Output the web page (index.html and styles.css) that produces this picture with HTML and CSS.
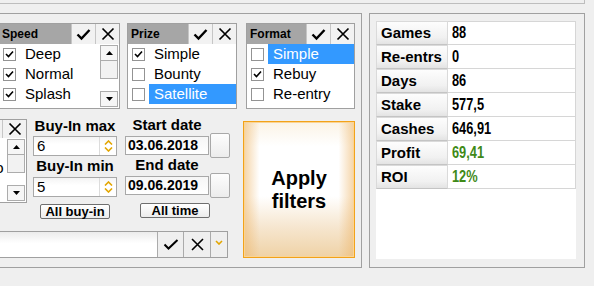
FILE: index.html
```html
<!DOCTYPE html>
<html lang="en">
<head>
    <meta charset="UTF-8">
    <meta name="viewport" content="width=device-width, initial-scale=1.0">
    <title>Filters</title>
    <link rel="stylesheet" href="styles.css">
</head>
<body>
    <div class="top-strip"></div>
    <div class="main">
        <div class="filters">
            <div class="lists">
                <div class="list-box speed">
                    <div class="lb-head">
                        <span class="lb-title">Speed</span>
                        <button class="hbtn"><svg width="15" height="13" viewBox="0 0 15 13"><path d="M1.5 6.5 L5.5 10.5 L13.5 2" fill="none" stroke="#000" stroke-width="2.4"/></svg></button>
                        <button class="hbtn"><svg width="14" height="14" viewBox="0 0 14 14"><path d="M1.5 1.5 L12.5 12.5 M12.5 1.5 L1.5 12.5" fill="none" stroke="#000" stroke-width="1.7"/></svg></button>
                    </div>
                    <div class="lb-body">
                        <ul class="items">
                            <li class="item"><span class="cb"><svg width="9" height="8" viewBox="0 0 9 8"><path d="M1 4 L3.5 6.5 L8 1.5" fill="none" stroke="#000" stroke-width="1.6"/></svg></span><span class="item-text">Deep</span></li>
                            <li class="item"><span class="cb"><svg width="9" height="8" viewBox="0 0 9 8"><path d="M1 4 L3.5 6.5 L8 1.5" fill="none" stroke="#000" stroke-width="1.6"/></svg></span><span class="item-text">Normal</span></li>
                            <li class="item"><span class="cb"><svg width="9" height="8" viewBox="0 0 9 8"><path d="M1 4 L3.5 6.5 L8 1.5" fill="none" stroke="#000" stroke-width="1.6"/></svg></span><span class="item-text">Splash</span></li>
                        </ul>
                        <div class="scrollbar">
                            <div class="sb-btn"><svg width="7" height="4" viewBox="0 0 7 4"><polygon points="0,4 3.5,0 7,4" fill="#000"/></svg></div>
                            <div class="sb-thumb"></div>
                            <div class="sb-track"></div>
                            <div class="sb-btn"><svg width="7" height="4" viewBox="0 0 7 4"><polygon points="0,0 7,0 3.5,4" fill="#000"/></svg></div>
                        </div>
                    </div>
                </div>

                <div class="list-box prize">
                    <div class="lb-head">
                        <span class="lb-title">Prize</span>
                        <button class="hbtn"><svg width="15" height="13" viewBox="0 0 15 13"><path d="M1.5 6.5 L5.5 10.5 L13.5 2" fill="none" stroke="#000" stroke-width="2.4"/></svg></button>
                        <button class="hbtn"><svg width="14" height="14" viewBox="0 0 14 14"><path d="M1.5 1.5 L12.5 12.5 M12.5 1.5 L1.5 12.5" fill="none" stroke="#000" stroke-width="1.7"/></svg></button>
                    </div>
                    <div class="lb-body">
                        <ul class="items">
                            <li class="item"><span class="cb"><svg width="9" height="8" viewBox="0 0 9 8"><path d="M1 4 L3.5 6.5 L8 1.5" fill="none" stroke="#000" stroke-width="1.6"/></svg></span><span class="item-text">Simple</span></li>
                            <li class="item"><span class="cb"></span><span class="item-text">Bounty</span></li>
                            <li class="item selected"><span class="cb"></span><span class="item-text">Satellite</span></li>
                        </ul>
                    </div>
                </div>

                <div class="list-box format">
                    <div class="lb-head">
                        <span class="lb-title">Format</span>
                        <button class="hbtn"><svg width="15" height="13" viewBox="0 0 15 13"><path d="M1.5 6.5 L5.5 10.5 L13.5 2" fill="none" stroke="#000" stroke-width="2.4"/></svg></button>
                        <button class="hbtn"><svg width="14" height="14" viewBox="0 0 14 14"><path d="M1.5 1.5 L12.5 12.5 M12.5 1.5 L1.5 12.5" fill="none" stroke="#000" stroke-width="1.7"/></svg></button>
                    </div>
                    <div class="lb-body">
                        <ul class="items">
                            <li class="item selected"><span class="cb"></span><span class="item-text">Simple</span></li>
                            <li class="item"><span class="cb"><svg width="9" height="8" viewBox="0 0 9 8"><path d="M1 4 L3.5 6.5 L8 1.5" fill="none" stroke="#000" stroke-width="1.6"/></svg></span><span class="item-text">Rebuy</span></li>
                            <li class="item"><span class="cb"></span><span class="item-text">Re-entry</span></li>
                        </ul>
                    </div>
                </div>
            </div>

            <div class="lower">
                <div class="lower-left">
                    <div class="controls">
                        <div class="list-box partial">
                            <div class="lb-head short">
                                <span class="lb-title"></span>
                                <button class="hbtn"><svg width="15" height="13" viewBox="0 0 15 13"><path d="M1.5 6.5 L5.5 10.5 L13.5 2" fill="none" stroke="#000" stroke-width="2.4"/></svg></button>
                                <button class="hbtn"><svg width="14" height="14" viewBox="0 0 14 14"><path d="M1.5 1.5 L12.5 12.5 M12.5 1.5 L1.5 12.5" fill="none" stroke="#000" stroke-width="1.7"/></svg></button>
                            </div>
                            <div class="lb-body">
                                <ul class="items">
                                    <li class="item"><span class="cb"></span><span class="item-text">Slow</span></li>
                                    <li class="item"><span class="cb"></span><span class="item-text">Turbo</span></li>
                                    <li class="item"><span class="cb"></span><span class="item-text">Fast</span></li>
                                </ul>
                                <div class="scrollbar">
                                    <div class="sb-btn"><svg width="7" height="4" viewBox="0 0 7 4"><polygon points="0,4 3.5,0 7,4" fill="#000"/></svg></div>
                                    <div class="sb-thumb"></div>
                                    <div class="sb-track"></div>
                                    <div class="sb-btn"><svg width="7" height="4" viewBox="0 0 7 4"><polygon points="0,0 7,0 3.5,4" fill="#000"/></svg></div>
                                </div>
                            </div>
                        </div>

                        <div class="buyin">
                            <div class="field-label">Buy-In max</div>
                            <div class="spin">
                                <span class="spin-value">6</span>
                                <span class="spin-arrows">
                                    <svg width="9" height="5" viewBox="0 0 9 5"><path d="M1 4.5 L4.5 1 L8 4.5" fill="none" stroke="#e3a600" stroke-width="1.6"/></svg>
                                    <svg width="9" height="5" viewBox="0 0 9 5"><path d="M1 0.5 L4.5 4 L8 0.5" fill="none" stroke="#e3a600" stroke-width="1.6"/></svg>
                                </span>
                            </div>
                            <div class="field-label second">Buy-In min</div>
                            <div class="spin">
                                <span class="spin-value">5</span>
                                <span class="spin-arrows">
                                    <svg width="9" height="5" viewBox="0 0 9 5"><path d="M1 4.5 L4.5 1 L8 4.5" fill="none" stroke="#e3a600" stroke-width="1.6"/></svg>
                                    <svg width="9" height="5" viewBox="0 0 9 5"><path d="M1 0.5 L4.5 4 L8 0.5" fill="none" stroke="#e3a600" stroke-width="1.6"/></svg>
                                </span>
                            </div>
                            <button class="small-btn buyin-btn">All buy-in</button>
                        </div>

                        <div class="dates">
                            <div class="date-label">Start date</div>
                            <div class="date-row">
                                <span class="date-field">03.06.2018</span>
                                <button class="date-btn"></button>
                            </div>
                            <div class="date-label">End date</div>
                            <div class="date-row">
                                <span class="date-field">09.06.2019</span>
                                <button class="date-btn"></button>
                            </div>
                            <button class="small-btn time-btn">All time</button>
                        </div>
                    </div>

                    <div class="search">
                        <div class="search-field"></div>
                        <button class="sbtn ok"><svg width="16" height="13" viewBox="0 0 16 13"><path d="M1.5 6.5 L5.5 10.5 L14.5 2" fill="none" stroke="#000" stroke-width="2"/></svg></button>
                        <button class="sbtn cancel"><svg width="13" height="13" viewBox="0 0 13 13"><path d="M1 1 L12 12 M12 1 L1 12" fill="none" stroke="#000" stroke-width="1.6"/></svg></button>
                        <button class="sbtn drop"><svg width="8" height="5" viewBox="0 0 8 5"><path d="M1 1 L4 4 L7 1" fill="none" stroke="#e3a600" stroke-width="1.6"/></svg></button>
                    </div>
                </div>

                <button class="apply">Apply<br>filters</button>
            </div>
        </div>

        <div class="stats">
            <div class="stats-body">
                <div class="stat-row"><div class="stat-name">Games</div><div class="stat-value"><span>88</span></div></div>
                <div class="stat-row"><div class="stat-name">Re-entrs</div><div class="stat-value"><span>0</span></div></div>
                <div class="stat-row"><div class="stat-name">Days</div><div class="stat-value"><span>86</span></div></div>
                <div class="stat-row"><div class="stat-name">Stake</div><div class="stat-value"><span>577,5</span></div></div>
                <div class="stat-row"><div class="stat-name">Cashes</div><div class="stat-value"><span>646,91</span></div></div>
                <div class="stat-row"><div class="stat-name">Profit</div><div class="stat-value plus"><span>69,41</span></div></div>
                <div class="stat-row"><div class="stat-name">ROI</div><div class="stat-value plus"><span>12%</span></div></div>
            </div>
        </div>
    </div>
</body>
</html>
```

FILE: styles.css
```css
* {
    margin: 0;
    padding: 0;
    box-sizing: border-box;
    font-family: "Liberation Sans", Arial, sans-serif;
}

body {
    width: 594px;
    height: 286px;
    overflow: hidden;
    background: #efefef;
    color: #000;
}

button {
    color: #000;
    cursor: pointer;
}

.top-strip {
    width: 585px;
    height: 4px;
    border-bottom: 1px solid #bdbdbd;
    border-right: 1px solid #bdbdbd;
}

.main {
    display: flex;
    margin-top: 9px;
}

/* left panel */

.filters {
    margin-left: -120px;
    width: 482px;
    height: 255px;
    border: 1px solid #a0a0a0;
    border-left: none;
    padding: 9px 0 0 118px;
}

.lists {
    display: flex;
}

.list-box {
    border: 1px solid #a0a0a0;
    background: #fff;
    display: flex;
    flex-direction: column;
}

.speed {
    width: 122px;
}

.prize {
    width: 110px;
    margin-left: 7px;
}

.format {
    width: 109px;
    margin-left: 9px;
}

.lb-head {
    height: 20px;
    background: #a6a6a6;
    display: flex;
}

.lb-head.short {
    height: 18px;
}

.lb-title {
    flex: 1;
    font-size: 12px;
    font-weight: bold;
    line-height: 20px;
    padding-left: 3px;
}

.hbtn {
    width: 24px;
    height: 100%;
    border: none;
    border-left: 1px solid #c6c6c6;
    background: #f2f2f2;
    display: flex;
    align-items: center;
    justify-content: center;
}

.lb-body {
    height: 64px;
    display: flex;
}

.items {
    list-style: none;
    flex: 1;
    min-width: 0;
}

.item {
    height: 20px;
    display: flex;
    align-items: center;
    padding-left: 4px;
}

.cb {
    width: 13px;
    height: 13px;
    flex: none;
    border: 1px solid #939393;
    background: #fff;
    margin-right: 4px;
    display: flex;
    align-items: center;
    justify-content: center;
}

.item-text {
    flex: 1;
    height: 20px;
    line-height: 20px;
    font-size: 15px;
    padding-left: 5px;
    white-space: nowrap;
}

.item.selected .item-text {
    background: #3399ff;
    color: #fff;
}

.scrollbar {
    width: 19px;
    flex: none;
    display: flex;
    flex-direction: column;
    padding: 1px 1px 1px 0;
}

.sb-btn {
    height: 16px;
    border: 1px solid #acacac;
    background: #f6f6f6;
    display: flex;
    align-items: center;
    justify-content: center;
}

.sb-thumb {
    height: 18px;
    border: 1px solid #acacac;
    border-top: none;
    background: #f2f2f2;
}

.sb-track {
    flex: 1;
}

/* lower controls */

.lower {
    display: flex;
    margin-top: 10px;
}

.lower-left {
    display: flex;
    flex-direction: column;
}

.controls {
    display: flex;
    height: 100px;
}

.partial {
    width: 89px;
    height: 84px;
    margin-left: -60px;
}

.buyin {
    width: 84px;
    margin-left: 6px;
    display: flex;
    flex-direction: column;
    align-items: center;
}

.field-label {
    height: 17px;
    font-size: 15px;
    font-weight: bold;
    line-height: 14px;
    text-align: center;
    white-space: nowrap;
}

.field-label.second {
    height: 21px;
    line-height: 20px;
}

.spin {
    width: 84px;
    height: 20px;
    border: 1px solid #a8a8a8;
    background: linear-gradient(#f4f4f4, #fff 40%);
    display: flex;
}

.spin-value {
    flex: 1;
    font-size: 15px;
    line-height: 18px;
    padding-left: 3px;
}

.spin-arrows {
    width: 17px;
    border-left: 1px solid #dcdcdc;
    display: flex;
    flex-direction: column;
    align-items: center;
    justify-content: center;
    gap: 2px;
}

.small-btn {
    height: 15px;
    border: 1px solid #6e6e6e;
    border-radius: 2px;
    background: linear-gradient(#ffffff, #ececec);
    font-size: 13px;
    font-weight: bold;
    line-height: 12px;
}

.buyin-btn {
    width: 70px;
    margin-top: 7px;
}

.dates {
    width: 105px;
    margin-left: 8px;
    display: flex;
    flex-direction: column;
}

.date-label {
    width: 84px;
    height: 14px;
    font-size: 15px;
    font-weight: bold;
    line-height: 12px;
    text-align: center;
}

.date-row {
    height: 25px;
    display: flex;
    align-items: center;
}

.date-field {
    width: 84px;
    height: 19px;
    border: 1px solid #a8a8a8;
    background: linear-gradient(#f6f6f6, #fff);
    font-size: 14px;
    font-weight: bold;
    line-height: 17px;
    padding-left: 2px;
}

.date-btn {
    width: 20px;
    height: 25px;
    margin-left: 1px;
    border: 1px solid #a8a8a8;
    border-radius: 2px;
    background: linear-gradient(#fdfdfd, #ececec);
}

.date-row + .date-label {
    height: 14px;
    margin-top: 1px;
}

.time-btn {
    width: 70px;
    margin: 5px 0 0 15px;
}

.search {
    width: 290px;
    height: 27px;
    margin: 12px 0 0 -60px;
    border: 1px solid #a0a0a0;
    display: flex;
}

.search-field {
    flex: 1;
    background: linear-gradient(#ececec, #fff 45%);
}

.sbtn {
    border: none;
    border-left: 1px solid #ababab;
    background: #efefef;
    display: flex;
    align-items: center;
    justify-content: center;
}

.sbtn.ok {
    width: 26px;
}

.sbtn.cancel {
    width: 27px;
}

.sbtn.drop {
    width: 17px;
    align-items: flex-start;
    padding-top: 8px;
}

.apply {
    align-self: flex-end;
    width: 112px;
    height: 137px;
    margin-left: 13px;
    border: 1px solid #f2a21a;
    box-shadow: inset 0 0 0 1px #fbd493;
    background:
        linear-gradient(to right, rgba(238, 184, 110, 0.6), rgba(255, 255, 255, 0) 14%, rgba(255, 255, 255, 0) 86%, rgba(238, 184, 110, 0.6)),
        linear-gradient(#fbf3e6, #fff 18%, #fff 55%, #f6e6cf 78%, #efd2a6);
    font-size: 20px;
    font-weight: bold;
    line-height: 23px;
}

/* right panel */

.stats {
    width: 216px;
    height: 255px;
    margin-left: 7px;
    border: 1px solid #a0a0a0;
    padding: 7px 8px 8px 6px;
}

.stats-body {
    height: 100%;
    background: #fff;
}

.stat-row {
    display: grid;
    grid-template-columns: 72px 128px;
    height: 24px;
}

.stat-name {
    border: 1px solid #dadada;
    border-bottom-color: #c4c4c4;
    background: linear-gradient(#fdfdfd, #f1f1f1 70%, #e3e3e3);
    font-size: 15px;
    font-weight: bold;
    line-height: 22px;
    padding-left: 4px;
}

.stat-value {
    border-right: 1px solid #d6d6d6;
    border-bottom: 1px solid #d6d6d6;
    font-size: 16px;
    font-weight: bold;
    line-height: 23px;
    padding-left: 4px;
}

.stat-value span {
    display: inline-block;
    transform: scaleX(0.8);
    transform-origin: left center;
}

.stat-row:first-child .stat-value {
    border-top: 1px solid #d6d6d6;
    line-height: 21px;
}

.stat-value.plus {
    color: #3f8a17;
}
```
